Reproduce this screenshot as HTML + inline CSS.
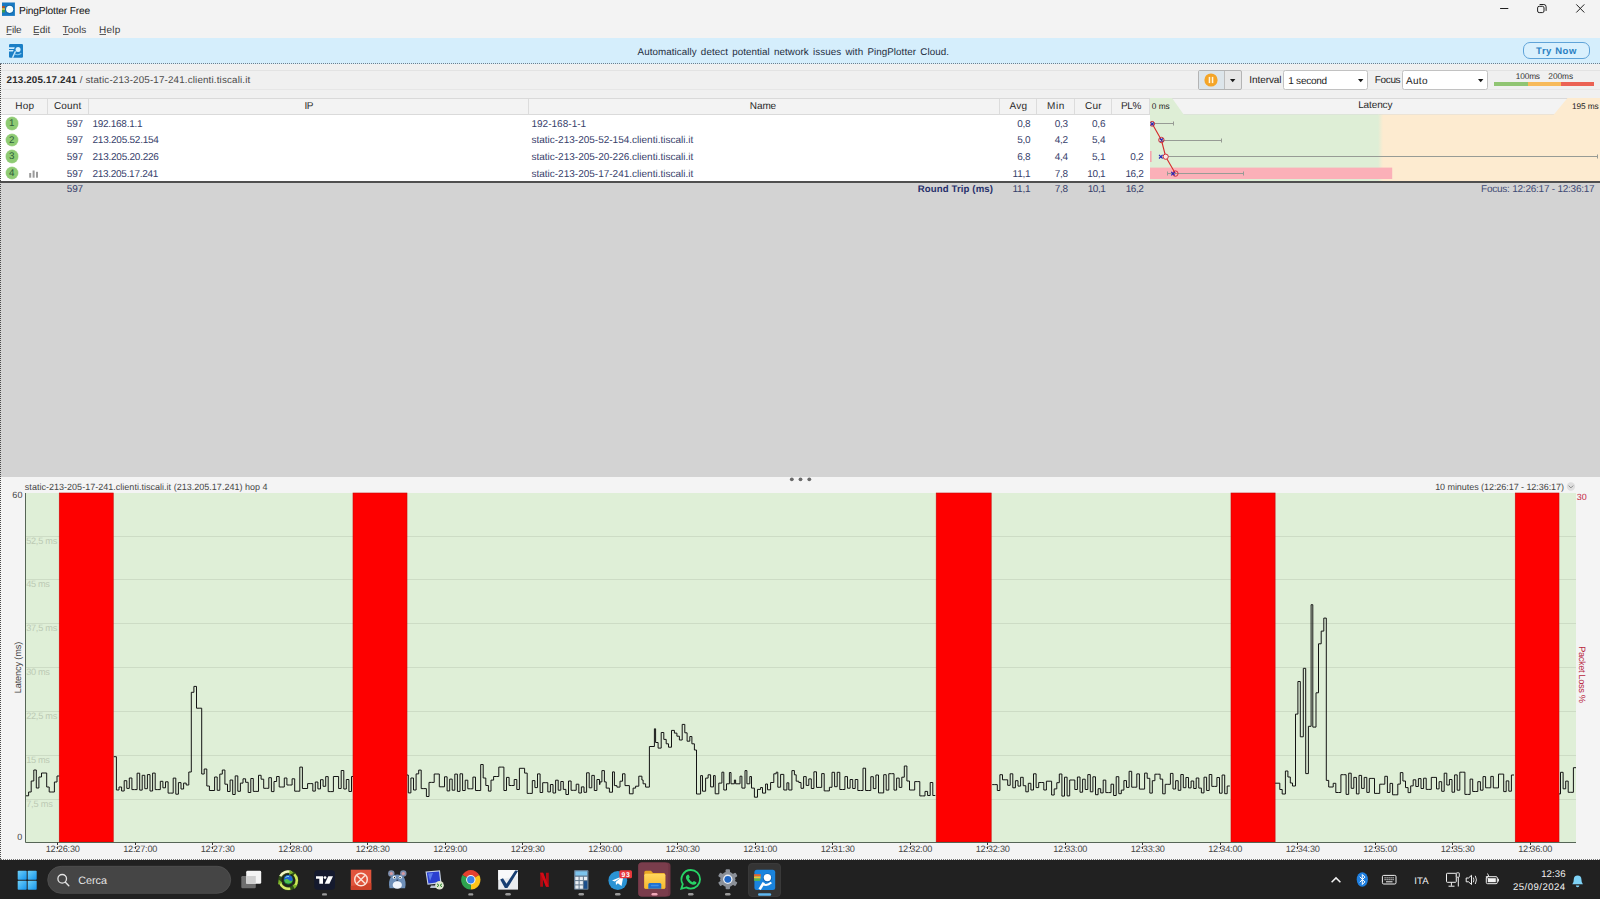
<!DOCTYPE html>
<html lang="it">
<head>
<meta charset="utf-8">
<title>PingPlotter Free</title>
<style>
html,body{margin:0;padding:0;}
body{width:1600px;height:899px;overflow:hidden;position:relative;background:#f3f3f3;font-family:"Liberation Sans",sans-serif;font-size:10px;color:#222;}
.a{position:absolute;}
.t{position:absolute;white-space:nowrap;line-height:1;}
u{text-decoration-thickness:1px;text-underline-offset:1px;}
.hop{position:absolute;left:5.500px;width:12.300px;height:12.300px;border-radius:50%;background:#8ecb73;box-shadow:0 0 0 0.500px #b5dca2;color:#2d5b3c;font-size:9.800px;line-height:14.300px;text-align:center;text-rendering:geometricPrecision;}
.ind{position:absolute;top:893px;width:5px;height:2.500px;border-radius:1.500px;background:#8d8d8d;}
</style>
</head>
<body>
<!-- ============ TITLE BAR ============ -->
<div class="a" style="left:0;top:0;width:1600px;height:39px;background:#f3f3f3"></div>
<svg class="a" style="left:0;top:0" width="18" height="18" viewBox="0 0 18 18">
  <rect x="2" y="2.500" width="12.900" height="13.400" fill="#1779c2"/>
  <rect x="2" y="6" width="2.900" height="2.100" fill="#a8562e"/>
  <rect x="2" y="8.100" width="2.900" height="1.900" fill="#c9c04a"/>
  <rect x="2" y="10" width="2.900" height="2.500" fill="#3f9a4c"/>
  <circle cx="9.650" cy="9.350" r="4.300" fill="#0f5f9e"/>
  <circle cx="9.650" cy="9.350" r="3.550" fill="#f4ffff"/>
</svg>
<svg class="a" style="left:1495px;top:0" width="105" height="20" viewBox="0 0 105 20">
  <path d="M5.100 8.500h8.200" stroke="#1f1f1f" stroke-width="1" fill="none"/>
  <rect x="42.600" y="6.300" width="6.400" height="6.300" rx="1.600" stroke="#1f1f1f" stroke-width="1" fill="none"/>
  <path d="M44.600 4.500h4.200a2.300 2.300 0 0 1 2.300 2.300v4.100" stroke="#1f1f1f" stroke-width="1" fill="none"/>
  <path d="M81.300 4.400l8 8.100M89.300 4.400l-8 8.100" stroke="#1f1f1f" stroke-width="1" fill="none"/>
</svg>
<!-- menu underlines -->
<svg class="a" style="left:0;top:30px" width="130" height="8" viewBox="0 30 130 8"><path d="M6.500 34.500h5M33.500 34.500h5.500M63 34.500h5.500M99.500 34.500h6.500" stroke="#4a4a4a" stroke-width="0.900"/></svg>
<!-- ============ BANNER ============ -->
<div class="a" style="left:0;top:38px;width:1600px;height:25.500px;background:#d5eefc"></div>
<div class="a" style="left:0;top:63px;width:1600px;height:0;border-top:1px dotted #6f7f8c"></div>
<svg class="a" style="left:9px;top:44px" width="14" height="14" viewBox="9 44 14 14">
  <rect x="9" y="44" width="14" height="13.700" rx="1.200" fill="#1b7fc6"/>
  <path d="M9 47.300h5.800l-0.700 1.600h-5.100zM9 49.900h4.600l-0.700 1.600h-3.900z" fill="#cfecfd"/>
  <circle cx="18.050" cy="49.400" r="2.500" fill="#d6f1ff"/>
  <path d="M15.500 51.300L12.500 57.700" stroke="#cfecfd" stroke-width="1.400" fill="none"/>
  <path d="M14.700 54.100Q18 55.700 21.300 53.300" stroke="#7fc4ee" stroke-width="1.100" fill="none"/>
</svg>
<div class="a" style="left:1523px;top:42px;width:66.500px;height:16.500px;border:1px solid #5fa3d8;border-radius:7px;background:#d9f0fd;box-sizing:border-box"></div>
<!-- ============ TOOLBAR ============ -->
<div class="a" style="left:0;top:64px;width:1600px;height:34px;background:#f0f0f0"></div>
<div class="a" style="left:1px;top:70px;width:1599px;height:1px;background:#e3e3e3"></div>
<div class="a" style="left:1px;top:89px;width:1599px;height:1px;background:#e6e6e6"></div>
<div class="a" style="left:1198px;top:70px;width:43.500px;height:19.500px;border:1px solid #b4b4b4;border-radius:2px;background:#e7e7e7;box-sizing:border-box"></div>
<div class="a" style="left:1199px;top:71px;width:24.500px;height:17.500px;background:#dde5ea"></div>
<div class="a" style="left:1223.500px;top:71px;width:1px;height:17.500px;background:#bdbdbd"></div>
<svg class="a" style="left:1204px;top:73px" width="14" height="14" viewBox="0 0 14 14">
  <circle cx="7" cy="7" r="6.600" fill="#f4a528"/>
  <rect x="4.700" y="3.900" width="1.500" height="6.200" fill="#fff6e0"/>
  <rect x="7.800" y="3.900" width="1.500" height="6.200" fill="#fff6e0"/>
</svg>
<svg class="a" style="left:1230px;top:78.500px" width="6" height="4" viewBox="0 0 6 4"><path d="M0 0h5.400l-2.700 3.200z" fill="#1a1a1a"/></svg>
<div class="a" style="left:1283px;top:70px;width:84.500px;height:19.500px;border:1px solid #c2c2c2;border-radius:2.500px;background:#fff;box-sizing:border-box"></div>
<svg class="a" style="left:1358.200px;top:78.500px" width="6" height="4" viewBox="0 0 6 4"><path d="M0 0h5.400l-2.700 3.200z" fill="#1a1a1a"/></svg>
<div class="a" style="left:1402px;top:70px;width:85.500px;height:19.500px;border:1px solid #c2c2c2;border-radius:2.500px;background:#fff;box-sizing:border-box"></div>
<svg class="a" style="left:1477.500px;top:78.500px" width="6" height="4" viewBox="0 0 6 4"><path d="M0 0h5.400l-2.700 3.200z" fill="#1a1a1a"/></svg>
<div class="a" style="left:1494px;top:81.500px;width:33.500px;height:4.500px;background:#90c573"></div>
<div class="a" style="left:1527.500px;top:81.500px;width:33.800px;height:4.500px;background:#f7ba5a"></div>
<div class="a" style="left:1561.300px;top:81.500px;width:32.700px;height:4.500px;background:#eb6254"></div>
<!-- ============ TABLE ============ -->
<div class="a" style="left:1px;top:97.500px;width:1599px;height:17px;background:#f3f3f3;border-top:1px solid #d9d9d9;border-bottom:1px solid #dadada;box-sizing:border-box"></div>
<div class="a" style="left:47px;top:99px;width:1px;height:15px;background:#dcdcdc"></div>
<div class="a" style="left:88px;top:99px;width:1px;height:15px;background:#dcdcdc"></div>
<div class="a" style="left:527.500px;top:99px;width:1px;height:15px;background:#dcdcdc"></div>
<div class="a" style="left:999px;top:99px;width:1px;height:15px;background:#dcdcdc"></div>
<div class="a" style="left:1036px;top:99px;width:1px;height:15px;background:#dcdcdc"></div>
<div class="a" style="left:1074px;top:99px;width:1px;height:15px;background:#dcdcdc"></div>
<div class="a" style="left:1111px;top:99px;width:1px;height:15px;background:#dcdcdc"></div>
<div class="a" style="left:1149px;top:99px;width:1px;height:15px;background:#dcdcdc"></div>
<div class="a" style="left:1px;top:114.500px;width:1149px;height:67px;background:#ffffff"></div>
<!-- latency column graph -->
<svg class="a" style="left:1150px;top:97px" width="450" height="85" viewBox="1150 97 450 85">
  <defs><linearGradient id="lg" x1="0" x2="1" y1="0" y2="0"><stop offset="0" stop-color="#deeed6"/><stop offset="1" stop-color="#fdebd0"/></linearGradient></defs>
  <rect x="1150" y="114.500" width="229" height="67.500" fill="#deeed6"/>
  <rect x="1378" y="114.500" width="5" height="67.500" fill="url(#lg)"/>
  <rect x="1383" y="114.500" width="217" height="67.500" fill="#fdebd0"/>
  <path d="M1150 98H1172L1184 115H1150z" fill="#deeed6"/>
  <path d="M1600 98H1567.500L1553.500 115H1600z" fill="#fdebd0"/>
  <rect x="1150" y="167.600" width="242.200" height="11.400" fill="#fbb0b8"/>
  <rect x="1150" y="151" width="1.600" height="11" fill="#f3a6ae"/>
  <g stroke="#979b95" stroke-width="1" fill="none">
    <path d="M1152 123.500H1173.500M1173.500 121.500v4"/>
    <path d="M1161 140.500H1221.500M1221.500 138.500v4"/>
    <path d="M1165 156.500H1597.500M1597.500 154.500v4"/>
    <path d="M1167.500 173.500H1243.500M1243.500 171.500v4M1167.500 171.500v4"/>
  </g>
  <path d="M1152.200 123.800L1161.400 140L1165.700 156.700L1175.400 173.600" stroke="#d62a2a" stroke-width="1.100" fill="none"/>
  <g stroke="#cf2f3a" stroke-width="1" fill="none">
    <circle cx="1152.200" cy="123.800" r="2.400"/><circle cx="1161.400" cy="140" r="2.700"/><circle cx="1165.700" cy="156.700" r="2.600" fill="#fbe9e4"/><circle cx="1175.400" cy="173.600" r="2.700"/>
  </g>
  <g stroke="#2424b8" stroke-width="1.100" fill="none">
    <path d="M1150.700 122.300l3 3m0-3l-3 3"/>
    <path d="M1159.900 138.500l3 3m0-3l-3 3"/>
    <path d="M1159 154.900l3.600 3.600m0-3.600l-3.600 3.600"/>
    <path d="M1171.200 171.800l3.600 3.600m0-3.600l-3.600 3.600"/>
  </g>
</svg>
<!-- hop badges -->
<div class="hop" style="top:117.300px">1</div>
<div class="hop" style="top:133.800px">2</div>
<div class="hop" style="top:150.400px">3</div>
<div class="hop" style="top:167px">4</div>
<svg class="a" style="left:29px;top:169.500px" width="10" height="8" viewBox="0 0 10 8">
  <rect x="0.200" y="3" width="2" height="4.700" fill="#9a9a9a"/><rect x="3.600" y="0.500" width="2" height="7.200" fill="#9a9a9a"/><rect x="7" y="1.800" width="2" height="5.900" fill="#9a9a9a"/>
</svg>
<!-- gray area -->
<div class="a" style="left:0;top:183px;width:1600px;height:293.700px;background:#d3d3d3"></div>
<div class="a" style="left:0;top:181px;width:1600px;height:1.800px;background:#4f4f4f"></div>
<!-- ============ CHART PANEL ============ -->
<div class="a" style="left:0;top:476.700px;width:1600px;height:383px;background:#f4f4f4"></div>
<svg class="a" style="left:0;top:477px" width="1600" height="382" viewBox="0 477 1600 382">
<rect x="26.0" y="493.0" width="1550.0" height="349.0" fill="#dfefd7"/>
<path d="M26.0 799.5H1576.0" stroke="#cddcc5" stroke-width="1"/>
<path d="M26.0 755.5H1576.0" stroke="#cddcc5" stroke-width="1"/>
<path d="M26.0 711.5H1576.0" stroke="#cddcc5" stroke-width="1"/>
<path d="M26.0 667.5H1576.0" stroke="#cddcc5" stroke-width="1"/>
<path d="M26.0 623.5H1576.0" stroke="#cddcc5" stroke-width="1"/>
<path d="M26.0 579.5H1576.0" stroke="#cddcc5" stroke-width="1"/>
<path d="M26.0 536.5H1576.0" stroke="#cddcc5" stroke-width="1"/>
<rect x="59.25" y="493.0" width="54.00" height="349.0" fill="#fe0000" stroke="#c90808" stroke-width="0.6"/>
<rect x="353.00" y="493.0" width="54.00" height="349.0" fill="#fe0000" stroke="#c90808" stroke-width="0.6"/>
<rect x="936.20" y="493.0" width="55.00" height="349.0" fill="#fe0000" stroke="#c90808" stroke-width="0.6"/>
<rect x="1231.00" y="493.0" width="44.10" height="349.0" fill="#fe0000" stroke="#c90808" stroke-width="0.6"/>
<rect x="1515.25" y="493.0" width="43.75" height="349.0" fill="#fe0000" stroke="#c90808" stroke-width="0.6"/>
<path d="M26.0,795.8 L28.6,795.8 L28.6,792.0 L31.2,792.0 L31.2,781.0 L33.8,781.0 L33.8,770.0 L36.3,770.0 L36.3,788.0 L38.9,788.0 L38.9,777.0 L41.5,777.0 L41.5,773.0 L44.1,773.0 L46.7,773.0 L46.7,787.0 L49.2,787.0 L49.2,792.0 L51.8,792.0 L54.4,792.0 L54.4,782.0 L57.0,782.0 L57.0,776.0 L59.2,776.0 M113.8,756.7 L116.4,756.7 L116.4,790.0 L119.0,790.0 L119.0,787.0 L121.6,787.0 L121.6,791.0 L124.2,791.0 L124.2,780.7 L126.8,780.7 L126.8,788.4 L129.3,788.4 L129.3,778.0 L131.9,778.0 L131.9,789.6 L134.5,789.6 L137.1,789.6 L137.1,773.2 L139.7,773.2 L139.7,790.1 L142.2,790.1 L142.2,775.3 L144.8,775.3 L144.8,788.7 L147.4,788.7 L147.4,774.6 L150.0,774.6 L150.0,791.0 L152.6,791.0 L152.6,773.1 L155.2,773.1 L155.2,789.6 L157.8,789.6 L160.3,789.6 L160.3,781.3 L162.9,781.3 L162.9,787.8 L165.5,787.8 L165.5,781.8 L168.1,781.8 L168.1,793.1 L170.7,793.1 L173.2,793.1 L173.2,778.1 L175.8,778.1 L175.8,794.2 L178.4,794.2 L178.4,782.6 L181.0,782.6 L181.0,789.0 L183.6,789.0 L183.6,783.1 L186.2,783.1 L186.2,785.0 L188.8,785.0 L188.8,772.0 L191.3,772.0 L191.3,692.3 L193.9,692.3 L193.9,686.4 L196.5,686.4 L196.5,708.2 L199.1,708.2 L201.7,708.2 L201.7,774.0 L204.2,774.0 L204.2,769.0 L206.8,769.0 L206.8,786.0 L209.4,786.0 L209.4,790.5 L212.0,790.5 L214.6,790.5 L214.6,777.0 L217.2,777.0 L217.2,790.3 L219.8,790.3 L219.8,774.1 L222.3,774.1 L222.3,770.0 L224.9,770.0 L224.9,784.2 L227.5,784.2 L227.5,791.5 L230.1,791.5 L230.1,780.0 L232.7,780.0 L232.7,794.5 L235.2,794.5 L235.2,775.9 L237.8,775.9 L237.8,791.3 L240.4,791.3 L240.4,783.1 L243.0,783.1 L243.0,778.8 L245.6,778.8 L245.6,782.3 L248.2,782.3 L248.2,792.5 L250.8,792.5 L250.8,778.5 L253.3,778.5 L253.3,791.4 L255.9,791.4 L258.5,791.4 L258.5,775.3 L261.1,775.3 L261.1,779.2 L263.7,779.2 L263.7,788.3 L266.2,788.3 L268.8,788.3 L268.8,777.7 L271.4,777.7 L271.4,791.6 L274.0,791.6 L274.0,781.5 L276.6,781.5 L276.6,776.5 L279.2,776.5 L279.2,787.0 L281.8,787.0 L284.3,787.0 L284.3,778.0 L286.9,778.0 L286.9,785.0 L289.5,785.0 L292.1,785.0 L292.1,778.8 L294.7,778.8 L294.7,791.2 L297.2,791.2 L299.8,791.2 L299.8,767.1 L302.4,767.1 L302.4,788.5 L305.0,788.5 L307.6,788.5 L307.6,783.6 L310.2,783.6 L312.8,783.6 L312.8,791.1 L315.3,791.1 L315.3,782.0 L317.9,782.0 L317.9,788.9 L320.5,788.9 L320.5,779.7 L323.1,779.7 L323.1,786.3 L325.7,786.3 L325.7,776.6 L328.2,776.6 L328.2,791.6 L330.8,791.6 L333.4,791.6 L333.4,776.5 L336.0,776.5 L338.6,776.5 L338.6,788.5 L341.2,788.5 L341.2,770.5 L343.8,770.5 L343.8,789.0 L346.3,789.0 L346.3,779.5 L348.9,779.5 L348.9,791.5 L351.5,791.5 L351.5,776.5 L353.0,776.5 M407.0,775.0 L408.3,775.0 L408.3,792.9 L410.9,792.9 L410.9,778.0 L413.5,778.0 L413.5,790.0 L416.1,790.0 L416.1,773.9 L418.7,773.9 L418.7,770.1 L421.2,770.1 L421.2,788.6 L423.8,788.6 L426.4,788.6 L426.4,796.5 L429.0,796.5 L429.0,782.4 L431.6,782.4 L434.2,782.4 L434.2,774.0 L436.8,774.0 L439.3,774.0 L439.3,786.8 L441.9,786.8 L444.5,786.8 L444.5,776.8 L447.1,776.8 L447.1,790.9 L449.7,790.9 L449.7,779.1 L452.2,779.1 L452.2,790.2 L454.8,790.2 L454.8,774.1 L457.4,774.1 L457.4,791.4 L460.0,791.4 L460.0,773.8 L462.6,773.8 L462.6,790.5 L465.2,790.5 L465.2,780.2 L467.8,780.2 L467.8,788.8 L470.3,788.8 L472.9,788.8 L472.9,777.1 L475.5,777.1 L475.5,790.5 L478.1,790.5 L480.7,790.5 L480.7,764.5 L483.2,764.5 L483.2,778.0 L485.8,778.0 L485.8,785.5 L488.4,785.5 L488.4,791.1 L491.0,791.1 L491.0,780.1 L493.6,780.1 L493.6,776.5 L496.2,776.5 L498.8,776.5 L498.8,767.1 L501.3,767.1 L503.9,767.1 L503.9,790.5 L506.5,790.5 L506.5,777.4 L509.1,777.4 L509.1,785.5 L511.7,785.5 L514.2,785.5 L514.2,779.5 L516.8,779.5 L516.8,789.5 L519.4,789.5 L519.4,768.3 L522.0,768.3 L524.6,768.3 L524.6,773.1 L527.2,773.1 L527.2,793.4 L529.8,793.4 L532.3,793.4 L532.3,780.6 L534.9,780.6 L534.9,787.6 L537.5,787.6 L537.5,773.9 L540.1,773.9 L540.1,792.5 L542.7,792.5 L542.7,782.7 L545.2,782.7 L547.8,782.7 L547.8,791.9 L550.4,791.9 L550.4,784.5 L553.0,784.5 L553.0,793.0 L555.6,793.0 L555.6,780.2 L558.2,780.2 L558.2,790.2 L560.8,790.2 L560.8,781.5 L563.3,781.5 L563.3,789.4 L565.9,789.4 L565.9,794.5 L568.5,794.5 L568.5,781.0 L571.1,781.0 L571.1,790.3 L573.7,790.3 L576.2,790.3 L576.2,784.2 L578.8,784.2 L578.8,793.0 L581.4,793.0 L581.4,786.9 L584.0,786.9 L584.0,792.3 L586.6,792.3 L586.6,772.8 L589.2,772.8 L589.2,787.8 L591.8,787.8 L591.8,775.4 L594.3,775.4 L594.3,790.5 L596.9,790.5 L596.9,779.5 L599.5,779.5 L599.5,784.5 L600.0,784.5 L600.0,781.9 L601.9,781.9 L601.9,770.6 L604.4,770.6 L604.4,781.9 L606.2,781.9 L606.2,788.1 L609.4,788.1 L609.4,792.2 L612.5,792.2 L612.5,771.9 L614.4,771.9 L614.4,785.6 L616.9,785.6 L616.9,787.1 L620.0,787.1 L620.0,781.2 L622.5,781.2 L622.5,773.8 L625.0,773.8 L625.0,785.6 L629.4,785.6 L629.4,793.8 L633.1,793.8 L633.1,788.1 L635.6,788.1 L635.6,786.2 L638.8,786.2 L638.8,776.2 L641.9,776.2 L641.9,780.0 L643.1,780.0 L643.1,783.8 L645.6,783.8 L645.6,787.1 L649.4,787.1 L649.4,746.5 L654.4,746.5 L654.4,728.8 L655.6,728.8 L655.6,742.5 L658.1,742.5 L658.1,748.1 L661.2,748.1 L661.2,732.5 L663.8,732.5 L663.8,739.4 L666.2,739.4 L666.2,743.8 L668.5,743.8 L668.5,747.2 L671.5,747.2 L671.5,730.4 L674.4,730.4 L674.4,733.1 L676.9,733.1 L676.9,736.2 L679.4,736.2 L679.4,740.0 L682.2,740.0 L682.2,724.4 L684.8,724.4 L684.8,732.8 L687.1,732.8 L687.1,741.2 L689.8,741.2 L689.8,736.5 L691.9,736.5 L691.9,743.8 L694.4,743.8 L694.4,750.0 L696.5,750.0 L696.5,794.0 L700.6,794.0 L700.6,775.6 L702.5,775.6 L702.5,791.2 L705.6,791.2 L705.6,778.1 L708.1,778.1 L708.1,774.8 L710.6,774.8 L710.6,786.9 L713.5,786.9 L713.5,775.6 L715.2,775.6 L715.2,793.8 L718.8,793.8 L718.8,783.1 L721.9,783.1 L721.9,772.2 L723.8,772.2 L723.8,790.0 L726.5,790.0 L726.5,783.8 L729.4,783.8 L729.4,772.5 L731.0,772.5 L731.0,783.8 L734.4,783.8 L734.4,780.0 L735.6,780.0 L735.6,783.8 L740.0,783.8 L740.0,776.2 L741.9,776.2 L741.9,788.1 L745.0,788.1 L745.0,770.6 L746.9,770.6 L746.9,783.8 L749.8,783.8 L749.8,776.5 L751.5,776.5 L751.5,788.1 L754.4,788.1 L754.4,797.2 L757.5,797.2 L757.5,789.4 L760.6,789.4 L760.6,787.5 L762.5,787.5 L762.5,793.1 L765.6,793.1 L765.6,784.0 L767.5,784.0 L767.5,789.8 L770.6,789.8 L770.6,782.5 L773.8,782.5 L773.8,773.8 L776.2,773.8 L776.2,772.2 L777.8,772.2 L777.8,787.2 L780.6,787.2 L780.6,774.4 L783.8,774.4 L783.8,790.0 L786.9,790.0 L786.9,782.8 L788.8,782.8 L788.8,790.0 L791.9,790.0 L791.9,770.6 L794.4,770.6 L794.4,774.8 L796.2,774.8 L796.2,781.2 L798.8,781.2 L798.8,782.5 L801.0,782.5 L801.0,788.3 L803.6,788.3 L803.6,776.6 L806.2,776.6 L806.2,785.4 L808.8,785.4 L808.8,778.9 L811.3,778.9 L811.3,788.5 L813.9,788.5 L813.9,771.8 L816.5,771.8 L816.5,787.4 L819.1,787.4 L821.7,787.4 L821.7,773.6 L824.2,773.6 L824.2,790.9 L826.8,790.9 L829.4,790.9 L829.4,787.3 L832.0,787.3 L832.0,772.3 L834.6,772.3 L834.6,786.7 L837.2,786.7 L837.2,772.3 L839.8,772.3 L839.8,789.5 L842.3,789.5 L844.9,789.5 L844.9,776.6 L847.5,776.6 L847.5,788.2 L850.1,788.2 L850.1,779.5 L852.7,779.5 L852.7,788.5 L855.2,788.5 L855.2,779.5 L857.8,779.5 L857.8,790.5 L860.4,790.5 L863.0,790.5 L863.0,768.2 L865.6,768.2 L865.6,790.5 L868.2,790.5 L870.8,790.5 L870.8,776.7 L873.3,776.7 L873.3,788.6 L875.9,788.6 L875.9,775.0 L878.5,775.0 L878.5,792.9 L881.1,792.9 L883.7,792.9 L883.7,774.7 L886.2,774.7 L886.2,790.1 L888.8,790.1 L888.8,773.7 L891.4,773.7 L894.0,773.7 L894.0,790.1 L896.6,790.1 L896.6,778.1 L899.2,778.1 L899.2,787.4 L901.8,787.4 L901.8,777.2 L904.3,777.2 L904.3,766.0 L906.9,766.0 L906.9,781.0 L909.5,781.0 L909.5,790.0 L912.1,790.0 L914.7,790.0 L914.7,781.6 L917.2,781.6 L919.8,781.6 L919.8,795.9 L922.4,795.9 L925.0,795.9 L925.0,791.4 L927.6,791.4 L927.6,795.5 L930.2,795.5 L930.2,782.5 L932.8,782.5 L932.8,795.5 L935.3,795.5 M992.2,784.6 L994.8,784.6 L997.3,784.6 L997.3,790.5 L999.9,790.5 L999.9,774.7 L1002.5,774.7 L1002.5,779.8 L1005.1,779.8 L1007.7,779.8 L1007.7,785.3 L1010.2,785.3 L1010.2,773.8 L1012.8,773.8 L1012.8,787.8 L1015.4,787.8 L1015.4,780.7 L1018.0,780.7 L1018.0,786.1 L1020.6,786.1 L1020.6,777.3 L1023.2,777.3 L1023.2,785.7 L1025.8,785.7 L1025.8,791.8 L1028.3,791.8 L1028.3,783.3 L1030.9,783.3 L1030.9,790.0 L1033.5,790.0 L1033.5,773.8 L1036.1,773.8 L1036.1,787.6 L1038.7,787.6 L1038.7,782.5 L1041.2,782.5 L1043.8,782.5 L1043.8,790.0 L1046.4,790.0 L1046.4,781.2 L1049.0,781.2 L1051.6,781.2 L1051.6,795.0 L1054.2,795.0 L1054.2,788.9 L1056.8,788.9 L1056.8,782.7 L1059.3,782.7 L1059.3,774.0 L1061.9,774.0 L1061.9,796.1 L1064.5,796.1 L1064.5,777.2 L1067.1,777.2 L1067.1,795.9 L1069.7,795.9 L1069.7,780.0 L1072.2,780.0 L1074.8,780.0 L1074.8,789.5 L1077.4,789.5 L1077.4,777.0 L1080.0,777.0 L1080.0,792.2 L1082.6,792.2 L1082.6,779.2 L1085.2,779.2 L1085.2,789.5 L1087.8,789.5 L1087.8,774.6 L1090.3,774.6 L1090.3,791.8 L1092.9,791.8 L1092.9,776.8 L1095.5,776.8 L1095.5,794.7 L1098.1,794.7 L1098.1,788.7 L1100.7,788.7 L1100.7,792.9 L1103.2,792.9 L1103.2,780.1 L1105.8,780.1 L1105.8,792.6 L1108.4,792.6 L1111.0,792.6 L1111.0,784.2 L1113.6,784.2 L1113.6,795.5 L1116.2,795.5 L1116.2,776.7 L1118.8,776.7 L1118.8,793.7 L1121.3,793.7 L1121.3,790.1 L1123.9,790.1 L1123.9,780.6 L1126.5,780.6 L1126.5,787.4 L1129.1,787.4 L1129.1,771.3 L1131.7,771.3 L1131.7,787.2 L1134.2,787.2 L1136.8,787.2 L1136.8,773.9 L1139.4,773.9 L1139.4,789.1 L1142.0,789.1 L1144.6,789.1 L1144.6,773.1 L1147.2,773.1 L1147.2,778.3 L1149.8,778.3 L1149.8,793.1 L1152.3,793.1 L1152.3,780.7 L1154.9,780.7 L1154.9,774.2 L1157.5,774.2 L1160.1,774.2 L1160.1,779.1 L1162.7,779.1 L1162.7,793.8 L1165.2,793.8 L1165.2,784.3 L1167.8,784.3 L1170.4,784.3 L1170.4,773.4 L1173.0,773.4 L1173.0,789.0 L1175.6,789.0 L1175.6,780.7 L1178.2,780.7 L1178.2,790.3 L1180.8,790.3 L1180.8,774.5 L1183.3,774.5 L1183.3,787.7 L1185.9,787.7 L1185.9,777.5 L1188.5,777.5 L1188.5,787.9 L1191.1,787.9 L1191.1,781.0 L1193.7,781.0 L1193.7,788.5 L1196.2,788.5 L1196.2,778.0 L1198.8,778.0 L1198.8,788.1 L1201.4,788.1 L1201.4,792.9 L1204.0,792.9 L1204.0,777.2 L1206.6,777.2 L1206.6,790.5 L1209.2,790.5 L1209.2,774.5 L1211.8,774.5 L1211.8,786.4 L1214.3,786.4 L1216.9,786.4 L1216.9,777.5 L1219.5,777.5 L1219.5,793.2 L1222.1,793.2 L1222.1,775.0 L1224.7,775.0 L1224.7,793.7 L1227.2,793.7 L1227.2,786.0 L1229.8,786.0 M1275.1,783.2 L1279.8,783.2 L1279.8,789.5 L1282.2,789.5 L1282.2,794.0 L1285.4,794.0 L1285.4,771.0 L1287.9,771.0 L1287.9,777.0 L1290.3,777.0 L1290.3,783.0 L1292.5,783.0 L1292.5,786.0 L1295.5,786.0 L1295.5,714.1 L1297.9,714.1 L1297.9,681.5 L1300.3,681.5 L1300.3,736.8 L1303.3,736.8 L1303.3,668.3 L1305.7,668.3 L1305.7,773.6 L1308.4,773.6 L1308.4,726.3 L1311.1,726.3 L1311.1,604.7 L1312.8,604.7 L1312.8,727.1 L1316.0,727.1 L1316.0,692.8 L1318.5,692.8 L1318.5,643.8 L1321.2,643.8 L1321.2,631.1 L1323.8,631.1 L1323.8,618.1 L1326.3,618.1 L1326.3,780.4 L1328.7,780.4 L1328.7,787.0 L1333.2,787.0 L1333.2,783.3 L1335.8,783.3 L1335.8,792.5 L1338.3,792.5 L1340.9,792.5 L1340.9,774.7 L1343.5,774.7 L1346.1,774.7 L1346.1,794.4 L1348.7,794.4 L1348.7,773.2 L1351.2,773.2 L1351.2,788.3 L1353.8,788.3 L1353.8,777.4 L1356.4,777.4 L1356.4,793.9 L1359.0,793.9 L1359.0,775.4 L1361.6,775.4 L1361.6,788.4 L1364.2,788.4 L1364.2,777.4 L1366.8,777.4 L1366.8,792.4 L1369.3,792.4 L1369.3,778.4 L1371.9,778.4 L1374.5,778.4 L1374.5,793.4 L1377.1,793.4 L1379.7,793.4 L1379.7,784.2 L1382.2,784.2 L1384.8,784.2 L1384.8,776.3 L1387.4,776.3 L1387.4,792.5 L1390.0,792.5 L1390.0,783.4 L1392.6,783.4 L1392.6,794.8 L1395.2,794.8 L1397.8,794.8 L1397.8,784.1 L1400.3,784.1 L1400.3,772.6 L1402.9,772.6 L1402.9,781.0 L1405.5,781.0 L1405.5,787.6 L1408.1,787.6 L1408.1,792.6 L1410.7,792.6 L1410.7,785.9 L1413.2,785.9 L1413.2,779.8 L1415.8,779.8 L1415.8,786.5 L1418.4,786.5 L1418.4,778.6 L1421.0,778.6 L1421.0,788.5 L1423.6,788.5 L1423.6,778.2 L1426.2,778.2 L1426.2,789.4 L1428.8,789.4 L1431.3,789.4 L1431.3,777.4 L1433.9,777.4 L1436.5,777.4 L1436.5,788.9 L1439.1,788.9 L1439.1,781.7 L1441.7,781.7 L1441.7,791.3 L1444.2,791.3 L1444.2,773.2 L1446.8,773.2 L1446.8,785.0 L1449.4,785.0 L1449.4,779.5 L1452.0,779.5 L1452.0,792.2 L1454.6,792.2 L1454.6,774.9 L1457.2,774.9 L1457.2,790.2 L1459.8,790.2 L1459.8,772.2 L1462.3,772.2 L1464.9,772.2 L1464.9,794.4 L1467.5,794.4 L1470.1,794.4 L1470.1,779.1 L1472.7,779.1 L1472.7,791.5 L1475.2,791.5 L1477.8,791.5 L1477.8,781.7 L1480.4,781.7 L1480.4,790.2 L1483.0,790.2 L1483.0,776.6 L1485.6,776.6 L1485.6,787.8 L1488.2,787.8 L1490.8,787.8 L1490.8,776.4 L1493.3,776.4 L1493.3,787.9 L1495.9,787.9 L1498.5,787.9 L1498.5,774.1 L1501.1,774.1 L1503.7,774.1 L1503.7,791.6 L1506.2,791.6 L1506.2,780.9 L1508.8,780.9 L1508.8,791.2 L1511.4,791.2 L1511.4,775.0 L1514.0,775.0 M1559.0,793.9 L1560.5,793.9 L1560.5,772.3 L1563.1,772.3 L1563.1,788.8 L1565.7,788.8 L1565.7,781.1 L1568.2,781.1 L1568.2,792.3 L1570.8,792.3 L1573.4,792.3 L1573.4,767.7 L1576.0,767.7" fill="none" stroke="#141414" stroke-width="1" stroke-linejoin="miter"/>
<path d="M25.5 493V842.5H1576" fill="none" stroke="#566556" stroke-width="1"/>
<path d="M57.5 842.5V850" stroke="#333" stroke-width="1" stroke-dasharray="2.5,1.5"/>
<path d="M135.5 842.5V850" stroke="#333" stroke-width="1" stroke-dasharray="2.5,1.5"/>
<path d="M212.5 842.5V850" stroke="#333" stroke-width="1" stroke-dasharray="2.5,1.5"/>
<path d="M290.5 842.5V850" stroke="#333" stroke-width="1" stroke-dasharray="2.5,1.5"/>
<path d="M367.5 842.5V850" stroke="#333" stroke-width="1" stroke-dasharray="2.5,1.5"/>
<path d="M445.5 842.5V850" stroke="#333" stroke-width="1" stroke-dasharray="2.5,1.5"/>
<path d="M522.5 842.5V850" stroke="#333" stroke-width="1" stroke-dasharray="2.5,1.5"/>
<path d="M600.5 842.5V850" stroke="#333" stroke-width="1" stroke-dasharray="2.5,1.5"/>
<path d="M677.5 842.5V850" stroke="#333" stroke-width="1" stroke-dasharray="2.5,1.5"/>
<path d="M755.5 842.5V850" stroke="#333" stroke-width="1" stroke-dasharray="2.5,1.5"/>
<path d="M832.5 842.5V850" stroke="#333" stroke-width="1" stroke-dasharray="2.5,1.5"/>
<path d="M910.5 842.5V850" stroke="#333" stroke-width="1" stroke-dasharray="2.5,1.5"/>
<path d="M987.5 842.5V850" stroke="#333" stroke-width="1" stroke-dasharray="2.5,1.5"/>
<path d="M1065.5 842.5V850" stroke="#333" stroke-width="1" stroke-dasharray="2.5,1.5"/>
<path d="M1142.5 842.5V850" stroke="#333" stroke-width="1" stroke-dasharray="2.5,1.5"/>
<path d="M1220.5 842.5V850" stroke="#333" stroke-width="1" stroke-dasharray="2.5,1.5"/>
<path d="M1297.5 842.5V850" stroke="#333" stroke-width="1" stroke-dasharray="2.5,1.5"/>
<path d="M1375.5 842.5V850" stroke="#333" stroke-width="1" stroke-dasharray="2.5,1.5"/>
<path d="M1452.5 842.5V850" stroke="#333" stroke-width="1" stroke-dasharray="2.5,1.5"/>
<path d="M1530.5 842.5V850" stroke="#333" stroke-width="1" stroke-dasharray="2.5,1.5"/>
<circle cx="791.8" cy="479.3" r="1.9" fill="#6a6a6a"/>
<circle cx="800.5" cy="479.3" r="1.9" fill="#6a6a6a"/>
<circle cx="809.3" cy="479.3" r="1.9" fill="#6a6a6a"/>
<circle cx="1570.9" cy="486.5" r="4.2" fill="#dedede"/><path d="M1568.6 485.6l2.300 2.300l2.300-2.300" fill="none" stroke="#8a8a8a" stroke-width="1"/>
</svg>
<!-- dotted window borders -->
<div class="a" style="left:0;top:64px;width:0;height:795px;border-left:1px dotted #4a4a4a"></div>
<div class="a" style="left:0;top:859px;width:1600px;height:0;border-top:1px dotted #777"></div>
<!-- ============ TASKBAR ============ -->
<div class="a" style="left:0;top:860px;width:1600px;height:39px;background:#212121"></div>
<svg class="a" style="left:0;top:859px" width="1600" height="40" viewBox="0 859 1600 40">
<defs>
  <linearGradient id="wg" x1="0" y1="0" x2="1" y2="1"><stop offset="0" stop-color="#6fd0f7"/><stop offset="1" stop-color="#1595ee"/></linearGradient>
  <linearGradient id="fg" x1="0" y1="0" x2="0" y2="1"><stop offset="0" stop-color="#ffd75e"/><stop offset="1" stop-color="#f5b82e"/></linearGradient>
  <radialGradient id="gg" cx="0.5" cy="0.5" r="0.5"><stop offset="0" stop-color="#1d5fd0"/><stop offset="0.450" stop-color="#1f8a4a"/><stop offset="0.460" stop-color="#2b2b2b"/><stop offset="0.600" stop-color="#2b2b2b"/><stop offset="0.610" stop-color="#b7e23a"/><stop offset="1" stop-color="#6fae1c"/></radialGradient>
</defs>
<!-- start button -->
<g fill="url(#wg)">
  <rect x="17.700" y="870.800" width="9" height="9" rx="0.800"/><rect x="27.700" y="870.800" width="9" height="9" rx="0.800"/>
  <rect x="17.700" y="880.800" width="9" height="9" rx="0.800"/><rect x="27.700" y="880.800" width="9" height="9" rx="0.800"/>
</g>
<!-- search pill -->
<rect x="47.700" y="866.300" width="183" height="27" rx="13.500" fill="#454545" stroke="#535353" stroke-width="0.800"/>
<circle cx="62.200" cy="878.800" r="4.300" fill="none" stroke="#e4e4e4" stroke-width="1.300"/>
<path d="M65.400 882.200l3.400 3.500" stroke="#e4e4e4" stroke-width="1.400" stroke-linecap="round"/>
<!-- task view -->
<rect x="241.300" y="876" width="14.500" height="12.300" rx="1.200" fill="#6e6e6e"/>
<rect x="246.200" y="870.800" width="15" height="13" rx="1.400" fill="#f4f4f4"/>
<rect x="246.200" y="876" width="9.600" height="7.800" fill="#d0d0d0"/>
<!-- green sync globe -->
<circle cx="288.300" cy="880.300" r="8.500" fill="none" stroke="#3f7d12" stroke-width="3.400" opacity="0.550"/>
<path d="M280.300 876.300A8.600 8.600 0 0 1 291.300 872.300" stroke="#f3f5c4" stroke-width="2.500" fill="none"/>
<path d="M294.300 874.300A8.600 8.600 0 0 1 294.800 886" stroke="#cfe85a" stroke-width="2.500" fill="none"/>
<path d="M290.300 888.600A8.600 8.600 0 0 1 280 882.500" stroke="#d8ec6a" stroke-width="2.500" fill="none"/>
<path d="M289.500 870l4 2.800l-4.300 2.300z" fill="#7fb52a"/>
<path d="M297.500 885l-2.800 4l-2.300-4.300z" fill="#7fb52a"/>
<path d="M278 884.500l0.800-4.800l3.800 3z" fill="#7fb52a"/>
<circle cx="288.300" cy="879.800" r="4.900" fill="#1d6a1a"/>
<circle cx="288.300" cy="879.300" r="4.300" fill="#1f62d2"/>
<path d="M284.300 880.300q2.500-2.500 5 0.300q2.300 1 3.300-0.600q-0.500 3.500-4.300 3.600q-3.200 0-4-3.300z" fill="#4fc44a"/>
<path d="M285.500 877.500q1.500-1.500 3.500-1" stroke="#7fd8f5" stroke-width="1" fill="none"/>
<!-- TradingView -->
<rect x="314.300" y="870.300" width="20.700" height="19.500" rx="3.500" fill="#151a2e"/>
<path d="M316 876.300h7v7.500h-3.700v-5h-3.300z" fill="#ffffff"/>
<circle cx="325" cy="877.600" r="1.400" fill="#ffffff"/>
<path d="M328.300 876.300h4.700l-3.600 7.500h-4.700z" fill="#ffffff"/>
<rect x="322" y="893.200" width="5" height="2.400" rx="1.200" fill="#9a9a9a"/>
<!-- red X app -->
<rect x="350.800" y="869.700" width="20.500" height="20.100" fill="#e2553c"/>
<path d="M350.800 886l20.500-3v6.800h-20.500z" fill="#cf4229"/>
<circle cx="361" cy="879.500" r="6.300" fill="none" stroke="#fbe3d8" stroke-width="1.500"/>
<path d="M357 875.500l8 8m0-8l-8 8" stroke="#fbe3d8" stroke-width="1.500"/>
<!-- mouse app -->
<circle cx="391.300" cy="873.500" r="3.200" fill="#7d8fae"/><circle cx="403.300" cy="873.500" r="3.200" fill="#7d8fae"/>
<circle cx="391.300" cy="873.500" r="1.600" fill="#d79aa0"/><circle cx="403.300" cy="873.500" r="1.600" fill="#d79aa0"/>
<path d="M389.500 888.300q-1.500-7 1.500-11.500q6.300-4.500 12.600 0q3 4.500 1.500 11.500z" fill="#6e8fb8"/>
<ellipse cx="397.300" cy="885" rx="4.600" ry="3.800" fill="#eef3fa"/>
<circle cx="394.300" cy="877.300" r="1.500" fill="#fff"/><circle cx="400.300" cy="877.300" r="1.500" fill="#fff"/>
<circle cx="394.500" cy="877.500" r="0.700" fill="#222"/><circle cx="400.100" cy="877.500" r="0.700" fill="#222"/>
<ellipse cx="397.300" cy="880.300" rx="1.100" ry="0.800" fill="#33425c"/>
<!-- remote desktop -->
<path d="M425.500 871.500l14.500-1.300l1.500 13l-14 1.500z" fill="#c8d3e6"/>
<path d="M426.800 872.600l12.200-1.100l1.200 10.600l-11.800 1.300z" fill="#2a3fd0"/>
<path d="M428 873.500l5-0.500l-3 8z" fill="#5b7bea"/>
<path d="M431 885.500h6l1 2.500h-8z" fill="#b9c2d0"/>
<circle cx="439.500" cy="885.300" r="4.300" fill="#dfe7d0"/>
<path d="M437 883.800l2 1.500l-2 1.500M442 883.800l-2 1.500l2 1.500" stroke="#2f8a2f" stroke-width="1" fill="none"/>
<!-- chrome -->
<path d="M470.8 879.8L462.40 874.95A9.7 9.7 0 0 1 479.20 874.95z" fill="#e5402f"/>
<path d="M470.8 879.8L479.20 874.95A9.7 9.7 0 0 1 470.80 889.50z" fill="#fcc31a"/>
<path d="M470.8 879.8L470.80 889.50A9.7 9.7 0 0 1 462.40 874.95z" fill="#2ea44f"/>
<circle cx="470.8" cy="879.8" r="4.700" fill="#f6f6f6"/>
<circle cx="470.8" cy="879.8" r="3.700" fill="#3b82ea"/>
<rect x="468.300" y="893.200" width="5" height="2.400" rx="1.200" fill="#9a9a9a"/>
<!-- checkmark app -->
<rect x="498.200" y="870" width="19.800" height="19.600" fill="#e9ecef"/>
<path d="M498.200 870h19.800v6l-19.800 4z" fill="#f8f9fa"/>
<path d="M500.200 879.500l2.800-1.200l3.500 5.500l8.700-13.300l3 0.300l-10.800 17.300l-2.500 0z" fill="#173e72"/>
<rect x="505.300" y="893" width="5.500" height="2.500" rx="1.250" fill="#9a9a9a"/>
<!-- netflix -->
<path d="M540.200 872.700h2.900l2.900 8.600v-8.600h2.800v14.100h-2.800l-3-8.800v8.800h-2.800z" fill="#b00a12"/>
<path d="M543.100 872.700l5.700 14.100h-2.800l-5.800-14.100z" fill="#d40b16"/>
<!-- calculator -->
<rect x="574" y="870" width="14.500" height="19.800" rx="1.200" fill="#63798f"/>
<rect x="575.300" y="871.300" width="11.900" height="4.200" fill="#7cc3ec"/>
<g fill="#e9eef3"><rect x="575.300" y="876.800" width="3.300" height="3.300"/><rect x="579.600" y="876.800" width="3.300" height="3.300"/><rect x="583.900" y="876.800" width="3.300" height="3.300"/>
<rect x="575.300" y="881.100" width="3.300" height="3.300"/><rect x="579.600" y="881.100" width="3.300" height="3.300"/>
<rect x="575.300" y="885.400" width="3.300" height="3.300"/><rect x="579.600" y="885.400" width="3.300" height="3.300"/></g>
<rect x="583.900" y="881.100" width="3.300" height="7.600" fill="#1c4f8c"/>
<rect x="578.500" y="893" width="5.500" height="2.500" rx="1.250" fill="#9a9a9a"/>
<!-- telegram -->
<circle cx="617.800" cy="880.500" r="9.400" fill="#2a93d4"/>
<path d="M612 880.500l11.500-4.800l-2 10.300l-3.700-2.700l-1.800 1.800l-0.300-3l5.300-4.500l-6.300 3.800z" fill="#ffffff"/>
<rect x="619.300" y="870.300" width="12.700" height="8" rx="1.500" fill="#e8383b"/>
<rect x="615" y="893" width="5.500" height="2.500" rx="1.250" fill="#9a9a9a"/>
<!-- explorer (highlighted) -->
<rect x="638.300" y="862.500" width="32.200" height="34" rx="3.500" fill="#703645"/>
<rect x="638.300" y="862.500" width="30" height="34" rx="3.500" fill="#7a3d4c"/>
<path d="M644.300 872.300a1.500 1.500 0 0 1 1.500-1.500h5.200l2 2.200h10.800a1.500 1.500 0 0 1 1.500 1.500v12.800a1.500 1.500 0 0 1-1.500 1.500h-18a1.500 1.500 0 0 1-1.500-1.500z" fill="#e9a624"/>
<path d="M644.300 875.200a1.500 1.500 0 0 1 1.500-1.500h18a1.500 1.500 0 0 1 1.500 1.500v12.100a1.500 1.500 0 0 1-1.500 1.500h-18a1.500 1.500 0 0 1-1.500-1.500z" fill="url(#fg)"/>
<path d="M648.300 888.800v-4.300a1.500 1.500 0 0 1 1.500-1.500h10a1.500 1.500 0 0 1 1.500 1.500v4.300z" fill="#1f6fd0"/>
<rect x="650.800" y="884.800" width="8" height="1.500" rx="0.700" fill="#3f8fe8"/>
<rect x="651.500" y="893" width="6" height="2.500" rx="1.250" fill="#f0a8b8"/>
<!-- whatsapp -->
<path d="M690.800 870a9.300 9.300 0 0 1 0 18.600a9.300 9.300 0 0 1-4.500-1.200l-5 1.400l1.500-4.700a9.300 9.300 0 0 1 8-14.100z" fill="#1f1f1f" stroke="#27d366" stroke-width="1.800"/>
<path d="M687.300 874.800l1.500 0l1 2.500l-1 1.300q1.300 2.500 3.800 3.700l1.300-1.200l2.500 1.200l-0.200 1.500q-1.500 1.700-4.200 0.700q-4.300-1.800-6-6.200q-0.500-2.300 1.300-3.500z" fill="#27d366"/>
<rect x="688" y="893" width="5.500" height="2.500" rx="1.250" fill="#9a9a9a"/>
<!-- settings gear -->
<g transform="translate(727.800 879.300)">
  <g fill="#8b9098">
    <circle r="7.600"/>
    <rect x="-2.200" y="-10" width="4.400" height="20" rx="1"/>
    <rect x="-2.200" y="-10" width="4.400" height="20" rx="1" transform="rotate(60)"/>
    <rect x="-2.200" y="-10" width="4.400" height="20" rx="1" transform="rotate(120)"/>
  </g>
  <circle r="4.700" fill="#e9eef5"/>
  <circle r="3.400" fill="#1f66c4"/>
</g>
<rect x="725" y="893" width="5.500" height="2.500" rx="1.250" fill="#9a9a9a"/>
<!-- pingplotter active -->
<rect x="748.500" y="863.500" width="32" height="33" rx="3.500" fill="#343434" stroke="#3e3e3e" stroke-width="0.800"/>
<rect x="754.400" y="869.800" width="20.800" height="20.200" rx="2.500" fill="#1a84de"/>
<rect x="754" y="874.200" width="6.800" height="2.200" fill="#e8622c"/>
<rect x="754" y="876.400" width="6.600" height="2.200" fill="#f1c62c"/>
<rect x="754" y="878.600" width="6.200" height="2.200" fill="#58b848"/>
<circle cx="767.400" cy="877.900" r="4.500" fill="#0e5fae"/>
<circle cx="767.400" cy="877.600" r="3.700" fill="#ffffff"/>
<path d="M771.300 882.600Q767.300 886.300 762.800 884.200" stroke="#ffffff" stroke-width="2" fill="none"/>
<path d="M763.800 882.600L759.600 889.400" stroke="#ffffff" stroke-width="2.700" fill="none"/>
<rect x="758" y="893.200" width="13.200" height="2.600" rx="1.300" fill="#5fb7f0"/>
<!-- ===== tray ===== -->
<path d="M1331.600 882.300l4.400-4.400l4.400 4.400" stroke="#f2f2f2" stroke-width="1.500" fill="none"/>
<ellipse cx="1362.300" cy="879.500" rx="5.600" ry="7.300" fill="#1e7fe0"/>
<path d="M1359.700 876.700l5.200 5.200l-2.600 2.600v-10l2.600 2.600l-5.200 5.200" stroke="#ffffff" stroke-width="1" fill="none"/>
<rect x="1382.400" y="875.400" width="13.600" height="8.600" rx="1.300" fill="none" stroke="#f2f2f2" stroke-width="1"/>
<path d="M1384.500 877.800h9.400M1384.500 879.700h9.400" stroke="#f2f2f2" stroke-width="1" stroke-dasharray="1.200,0.800"/>
<path d="M1386 881.800h6.500" stroke="#f2f2f2" stroke-width="1"/>
<!-- network monitor -->
<rect x="1446.500" y="873.300" width="9.800" height="9" rx="0.800" fill="none" stroke="#f2f2f2" stroke-width="1"/>
<path d="M1451.400 882.500v3.300M1448.500 886.200h6M1458.300 877v9.500" stroke="#f2f2f2" stroke-width="1"/>
<rect x="1456.300" y="872.800" width="3" height="4.400" rx="0.500" fill="#212121" stroke="#f2f2f2" stroke-width="0.900"/>
<!-- speaker -->
<path d="M1466.200 878h2.300l3-2.700v9.200l-3-2.700h-2.300z" fill="none" stroke="#f2f2f2" stroke-width="1" stroke-linejoin="round"/>
<path d="M1473.300 877.500q1.300 2.400 0 4.800M1475.300 875.800q2.300 4 0 8.200" stroke="#f2f2f2" stroke-width="0.900" fill="none"/>
<!-- battery -->
<rect x="1486.300" y="876.700" width="11" height="7" rx="1.200" fill="none" stroke="#f2f2f2" stroke-width="1"/>
<rect x="1487.800" y="878.200" width="8" height="4" fill="#f2f2f2"/>
<path d="M1498.300 878.800v2.800" stroke="#f2f2f2" stroke-width="1.200"/>
<path d="M1487.500 873.500l1.300 2.800l-2.500 0.300l3.200 3.300" stroke="#f2f2f2" stroke-width="0.900" fill="none"/>
<!-- bell -->
<path d="M1572.300 884.300q1.500-1.500 1.500-5a3.800 3.800 0 0 1 7.600 0q0 3.500 1.500 5z" fill="#7fd3f7"/>
<path d="M1575.800 885.500a1.800 1.800 0 0 0 3.600 0z" fill="#7fd3f7"/>
</svg>


<!-- ============ TEXT ============ -->
<svg class="a" style="left:0;top:0;font-family:'Liberation Sans',sans-serif;text-rendering:geometricPrecision" width="1600" height="899" viewBox="0 0 1600 899">
<text x="19.05" y="14" font-size="10.2" fill="#111" letter-spacing="-0.170">PingPlotter Free</text>
<text x="6.05" y="33" font-size="10" fill="#3a3a3a" letter-spacing="-0.181">File</text>
<text x="33.05" y="33" font-size="10" fill="#3a3a3a" letter-spacing="0.041">Edit</text>
<text x="62.55" y="33" font-size="10" fill="#3a3a3a" letter-spacing="0.108">Tools</text>
<text x="99.05" y="33" font-size="10" fill="#3a3a3a" letter-spacing="0.205">Help</text>
<text x="637.55" y="55" font-size="9.8" fill="#1f2d3d" letter-spacing="0.060" style="word-spacing:1.5px;">Automatically detect potential network issues with PingPlotter Cloud.</text>
<text x="1536.05" y="54" font-size="9.5" fill="#2a7fc2" letter-spacing="0.550" font-weight="bold">Try Now</text>
<text x="6.55" y="83" font-size="9.8" fill="#4a4a4a" letter-spacing="0.161"><tspan font-weight="bold" fill="#2a2a2a">213.205.17.241</tspan> / static-213-205-17-241.clienti.tiscali.it</text>
<text x="1249.25" y="83" font-size="10" fill="#222" letter-spacing="-0.075">Interval</text>
<text x="1288.25" y="84" font-size="10" fill="#222" letter-spacing="-0.237">1 second</text>
<text x="1374.85" y="83" font-size="10" fill="#222" letter-spacing="-0.367">Focus</text>
<text x="1405.95" y="84" font-size="10" fill="#222" letter-spacing="0.330">Auto</text>
<text x="1515.85" y="79" font-size="8.3" fill="#333" letter-spacing="-0.181">100ms</text>
<text x="1548.35" y="79" font-size="8.3" fill="#333" letter-spacing="-0.021">200ms</text>
<text x="15.25" y="109" font-size="10" fill="#2a2a2a" letter-spacing="0.180">Hop</text>
<text x="53.95" y="109" font-size="10" fill="#2a2a2a" letter-spacing="0.163">Count</text>
<text x="304.55" y="109" font-size="10" fill="#2a2a2a" letter-spacing="-0.527">IP</text>
<text x="749.85" y="109" font-size="10" fill="#2a2a2a" letter-spacing="-0.122">Name</text>
<text x="1009.55" y="109" font-size="10" fill="#2a2a2a" letter-spacing="0.279">Avg</text>
<text x="1047.05" y="109" font-size="10" fill="#2a2a2a" letter-spacing="0.592">Min</text>
<text x="1085.05" y="109" font-size="10" fill="#2a2a2a" letter-spacing="0.258">Cur</text>
<text x="1121.05" y="109" font-size="10" fill="#2a2a2a" letter-spacing="-0.408">PL%</text>
<text x="1151.75" y="109" font-size="8.3" fill="#222" letter-spacing="-0.021">0 ms</text>
<text x="1358.15" y="108" font-size="10" fill="#2a2a2a" letter-spacing="-0.119">Latency</text>
<text x="1572.05" y="109" font-size="8.3" fill="#222" letter-spacing="-0.136">195 ms</text>
<text x="66.75" y="127" font-size="10" fill="#36406a" letter-spacing="-0.163">597</text>
<text x="92.55" y="127" font-size="10" fill="#36406a" letter-spacing="-0.293">192.168.1.1</text>
<text x="531.45" y="127" font-size="10" fill="#36406a" letter-spacing="0.020">192-168-1-1</text>
<text x="1017.25" y="127" font-size="10" fill="#36406a" letter-spacing="-0.235">0,8</text>
<text x="1054.65" y="127" font-size="10" fill="#36406a" letter-spacing="-0.235">0,3</text>
<text x="1092.05" y="127" font-size="10" fill="#36406a" letter-spacing="-0.235">0,6</text>
<text x="66.75" y="143" font-size="10" fill="#36406a" letter-spacing="-0.163">597</text>
<text x="92.55" y="143" font-size="10" fill="#36406a" letter-spacing="-0.244">213.205.52.154</text>
<text x="531.45" y="143" font-size="10" fill="#36406a" letter-spacing="0.001">static-213-205-52-154.clienti.tiscali.it</text>
<text x="1017.25" y="143" font-size="10" fill="#36406a" letter-spacing="-0.235">5,0</text>
<text x="1054.65" y="143" font-size="10" fill="#36406a" letter-spacing="-0.235">4,2</text>
<text x="1092.05" y="143" font-size="10" fill="#36406a" letter-spacing="-0.235">5,4</text>
<text x="66.75" y="160" font-size="10" fill="#36406a" letter-spacing="-0.163">597</text>
<text x="92.55" y="160" font-size="10" fill="#36406a" letter-spacing="-0.244">213.205.20.226</text>
<text x="531.45" y="160" font-size="10" fill="#36406a" letter-spacing="0.001">static-213-205-20-226.clienti.tiscali.it</text>
<text x="1017.25" y="160" font-size="10" fill="#36406a" letter-spacing="-0.235">6,8</text>
<text x="1054.65" y="160" font-size="10" fill="#36406a" letter-spacing="-0.235">4,4</text>
<text x="1092.05" y="160" font-size="10" fill="#36406a" letter-spacing="-0.235">5,1</text>
<text x="1130.15" y="160" font-size="10" fill="#36406a" letter-spacing="-0.235">0,2</text>
<text x="66.75" y="177" font-size="10" fill="#36406a" letter-spacing="-0.163">597</text>
<text x="92.55" y="177" font-size="10" fill="#36406a" letter-spacing="-0.294">213.205.17.241</text>
<text x="531.45" y="177" font-size="10" fill="#36406a" letter-spacing="0.001">static-213-205-17-241.clienti.tiscali.it</text>
<text x="1012.55" y="177" font-size="10" fill="#36406a" letter-spacing="-0.209">11,1</text>
<text x="1054.65" y="177" font-size="10" fill="#36406a" letter-spacing="-0.235">7,8</text>
<text x="1087.35" y="177" font-size="10" fill="#36406a" letter-spacing="-0.392">10,1</text>
<text x="1125.45" y="177" font-size="10" fill="#36406a" letter-spacing="-0.392">16,2</text>
<text x="66.75" y="192" font-size="10" fill="#36406a" letter-spacing="-0.163">597</text>
<text x="917.75" y="192" font-size="9.6" fill="#27306b" letter-spacing="0.117" font-weight="bold">Round Trip (ms)</text>
<text x="1012.45" y="192" font-size="10" fill="#36406a" letter-spacing="-0.184">11,1</text>
<text x="1054.75" y="192" font-size="10" fill="#36406a" letter-spacing="-0.269">7,8</text>
<text x="1087.75" y="192" font-size="10" fill="#36406a" letter-spacing="-0.492">10,1</text>
<text x="1125.75" y="192" font-size="10" fill="#36406a" letter-spacing="-0.467">16,2</text>
<text x="1481.05" y="192" font-size="10" fill="#3f4a74" letter-spacing="-0.236">Focus: 12:26:17 - 12:36:17</text>
<text x="24.85" y="490" font-size="9" fill="#454545" letter-spacing="0.018">static-213-205-17-241.clienti.tiscali.it (213.205.17.241) hop 4</text>
<text x="1435.15" y="490" font-size="9" fill="#454545" letter-spacing="-0.056">10 minutes (12:26:17 - 12:36:17)</text>
<text x="12.30" y="498" font-size="9" fill="#444" letter-spacing="0.117">60</text>
<text x="17.35" y="840" font-size="9" fill="#444" letter-spacing="0.584">0</text>
<text x="1576.85" y="500" font-size="9" fill="#c42844" letter-spacing="-0.058">30</text>
<text x="26.15" y="544" font-size="9.2" fill="#bccab4" letter-spacing="-0.255">52,5 ms</text>
<text x="26.15" y="587" font-size="9.2" fill="#bccab4" letter-spacing="-0.306">45 ms</text>
<text x="26.15" y="631" font-size="9.2" fill="#bccab4" letter-spacing="-0.255">37,5 ms</text>
<text x="26.15" y="675" font-size="9.2" fill="#bccab4" letter-spacing="-0.306">30 ms</text>
<text x="26.15" y="719" font-size="9.2" fill="#bccab4" letter-spacing="-0.255">22,5 ms</text>
<text x="26.15" y="763" font-size="9.2" fill="#bccab4" letter-spacing="-0.306">15 ms</text>
<text x="26.15" y="807" font-size="9.2" fill="#bccab4" letter-spacing="-0.196">7,5 ms</text>
<text x="45.65" y="852" font-size="9.2" fill="#444" letter-spacing="-0.208">12:26:30</text>
<text x="123.15" y="852" font-size="9.2" fill="#444" letter-spacing="-0.208">12:27:00</text>
<text x="200.65" y="852" font-size="9.2" fill="#444" letter-spacing="-0.208">12:27:30</text>
<text x="278.15" y="852" font-size="9.2" fill="#444" letter-spacing="-0.208">12:28:00</text>
<text x="355.65" y="852" font-size="9.2" fill="#444" letter-spacing="-0.208">12:28:30</text>
<text x="433.15" y="852" font-size="9.2" fill="#444" letter-spacing="-0.208">12:29:00</text>
<text x="510.65" y="852" font-size="9.2" fill="#444" letter-spacing="-0.208">12:29:30</text>
<text x="588.15" y="852" font-size="9.2" fill="#444" letter-spacing="-0.208">12:30:00</text>
<text x="665.65" y="852" font-size="9.2" fill="#444" letter-spacing="-0.208">12:30:30</text>
<text x="743.15" y="852" font-size="9.2" fill="#444" letter-spacing="-0.208">12:31:00</text>
<text x="820.65" y="852" font-size="9.2" fill="#444" letter-spacing="-0.208">12:31:30</text>
<text x="898.15" y="852" font-size="9.2" fill="#444" letter-spacing="-0.208">12:32:00</text>
<text x="975.65" y="852" font-size="9.2" fill="#444" letter-spacing="-0.208">12:32:30</text>
<text x="1053.15" y="852" font-size="9.2" fill="#444" letter-spacing="-0.208">12:33:00</text>
<text x="1130.65" y="852" font-size="9.2" fill="#444" letter-spacing="-0.208">12:33:30</text>
<text x="1208.15" y="852" font-size="9.2" fill="#444" letter-spacing="-0.208">12:34:00</text>
<text x="1285.65" y="852" font-size="9.2" fill="#444" letter-spacing="-0.208">12:34:30</text>
<text x="1363.15" y="852" font-size="9.2" fill="#444" letter-spacing="-0.208">12:35:00</text>
<text x="1440.65" y="852" font-size="9.2" fill="#444" letter-spacing="-0.208">12:35:30</text>
<text x="1518.15" y="852" font-size="9.2" fill="#444" letter-spacing="-0.208">12:36:00</text>
<text x="0" y="0" transform="translate(21.40 693.20) rotate(-90)" font-size="9.2" fill="#444" letter-spacing="-0.151">Latency (ms)</text>
<text x="0" y="0" transform="translate(1578.60 646.30) rotate(90)" font-size="9.2" fill="#b81f3c" letter-spacing="-0.345">Packet Loss %</text>
<text x="78.30" y="884" font-size="10.8" fill="#e6e6e6" letter-spacing="-0.033">Cerca</text>
<text x="1414.35" y="884" font-size="9.6" fill="#f2f2f2" letter-spacing="0.027">ITA</text>
<text x="1541.15" y="877" font-size="9.6" fill="#f2f2f2" letter-spacing="0.097">12:36</text>
<text x="1512.95" y="890" font-size="9.6" fill="#f2f2f2" letter-spacing="0.468">25/09/2024</text>
<text x="621.55" y="877" font-size="6.8" fill="#fff" letter-spacing="0.669" font-weight="bold">93</text>
</svg>
</body>
</html>
